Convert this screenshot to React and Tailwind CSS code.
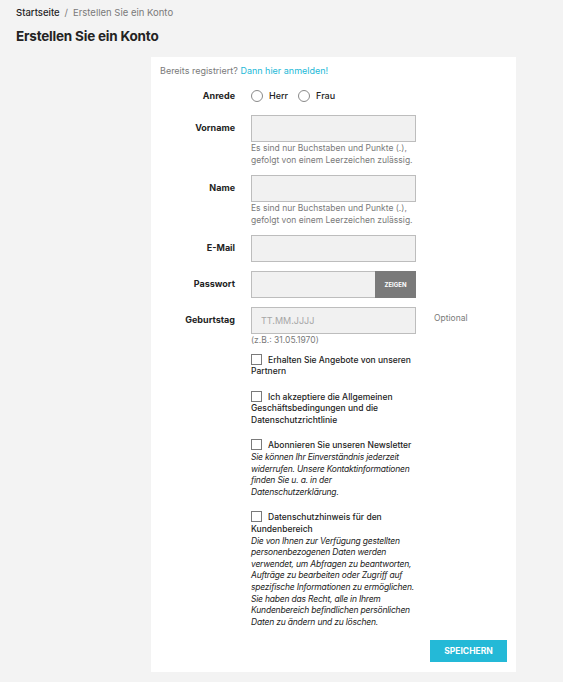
function Field({ label, children, help, aside }) {
  return (
    <div className="flex items-start">
      <div className="w-[75px] shrink-0 pt-[7px] text-right text-[9px] font-bold leading-[12px] text-[#232323]">
        {label}
      </div>
      <div className="ml-[16px] w-[165px] shrink-0">
        {children}
        {help ? (
          <div className="text-[8.5px] leading-[12px] text-[#7a7a7a]">{help}</div>
        ) : null}
      </div>
      {aside ? (
        <div className="ml-[18px] pt-[5px] text-[8.5px] leading-[12px] text-[#7a7a7a]">
          {aside}
        </div>
      ) : null}
    </div>
  );
}

function TextInput({ placeholder }) {
  return (
    <input
      type="text"
      placeholder={placeholder}
      className="block h-[27px] w-full border border-[#bdbdbd] bg-[#f1f1f1] px-[9px] text-[9px] text-[#232323] outline-none placeholder:text-[#a6a6a6]"
    />
  );
}

function Box() {
  return (
    <span className="mr-[6px] inline-block h-[11px] w-[11px] border border-[#7a7a7a] bg-white align-[-2px]" />
  );
}

function Check({ label, note }) {
  return (
    <div className="ml-[91px] w-[170px] text-[8.5px] leading-[11.6px] text-[#232323]">
      <div className="font-medium">
        <Box />
        {label}
      </div>
      {note ? <div className="italic tracking-[-0.2px]">{note}</div> : null}
    </div>
  );
}

const help =
  "Es sind nur Buchstaben und Punkte (.), gefolgt von einem Leerzeichen zulässig.";

export default function App() {
  return (
    <div className="min-h-[682px] bg-[#f3f3f3] px-[16px] pt-[6px] font-['Inter',sans-serif] text-[#232323]">
      <nav className="text-[9.5px] leading-[14px]">
        <span className="font-medium text-[#232323]">Startseite</span>
        <span className="mx-[5px] text-[#7a7a7a]">/</span>
        <span className="text-[#7a7a7a]">Erstellen Sie ein Konto</span>
      </nav>
      <h1 className="mt-[6px] text-[13.5px] font-bold leading-[20px] tracking-[-0.2px] text-[#232323]">
        Erstellen Sie ein Konto
      </h1>

      <div className="ml-[135px] mt-[11px] w-[365px] bg-white px-[9px] pb-[10px] pt-[8px]">
        <p className="text-[9px] leading-[12px] text-[#7a7a7a]">
          Bereits registriert?{" "}
          <a className="text-[#24b9d7]">Dann hier anmelden!</a>
        </p>

        <div className="mt-[12px] flex items-center">
          <div className="w-[75px] text-right text-[9px] font-bold leading-[12px]">Anrede</div>
          <div className="ml-[16px] flex items-center text-[9px] font-medium">
            <span className="h-[12px] w-[12px] rounded-full border border-[#8a8a8a]" />
            <span className="ml-[6px]">Herr</span>
            <span className="ml-[10px] h-[12px] w-[12px] rounded-full border border-[#8a8a8a]" />
            <span className="ml-[6px]">Frau</span>
          </div>
        </div>

        <div className="mt-[12px] flex flex-col gap-[9px]">
          <Field label="Vorname" help={help}>
            <TextInput />
          </Field>
          <Field label="Name" help={help}>
            <TextInput />
          </Field>
          <Field label="E-Mail">
            <TextInput />
          </Field>
          <Field label="Passwort">
            <div className="flex h-[27px]">
              <input
                type="password"
                className="h-full min-w-0 flex-1 border border-r-0 border-[#bdbdbd] bg-[#f1f1f1] outline-none"
              />
              <button className="h-full w-[41px] bg-[#7a7a7a] text-[6px] font-bold text-white">
                ZEIGEN
              </button>
            </div>
          </Field>
          <Field label="Geburtstag" help="(z.B.: 31.05.1970)" aside="Optional">
            <TextInput placeholder="TT.MM.JJJJ" />
          </Field>
        </div>

        <div className="mt-[8px] flex flex-col gap-[13px]">
          <Check label="Erhalten Sie Angebote von unseren Partnern" />
          <Check label="Ich akzeptiere die Allgemeinen Geschäftsbedingungen und die Datenschutzrichtlinie" />
          <Check
            label="Abonnieren Sie unseren Newsletter"
            note="Sie können Ihr Einverständnis jederzeit widerrufen. Unsere Kontaktinformationen finden Sie u. a. in der Datenschutzerklärung."
          />
          <Check
            label="Datenschutzhinweis für den Kundenbereich"
            note="Die von Ihnen zur Verfügung gestellten personenbezogenen Daten werden verwendet, um Abfragen zu beantworten, Aufträge zu bearbeiten oder Zugriff auf spezifische Informationen zu ermöglichen. Sie haben das Recht, alle in Ihrem Kundenbereich befindlichen persönlichen Daten zu ändern und zu löschen."
          />
        </div>

        <div className="mt-[12px] flex justify-end">
          <button className="h-[22px] w-[77px] bg-[#24b9d7] text-[8.5px] font-bold text-white">
            SPEICHERN
          </button>
        </div>
      </div>
    </div>
  );
}
